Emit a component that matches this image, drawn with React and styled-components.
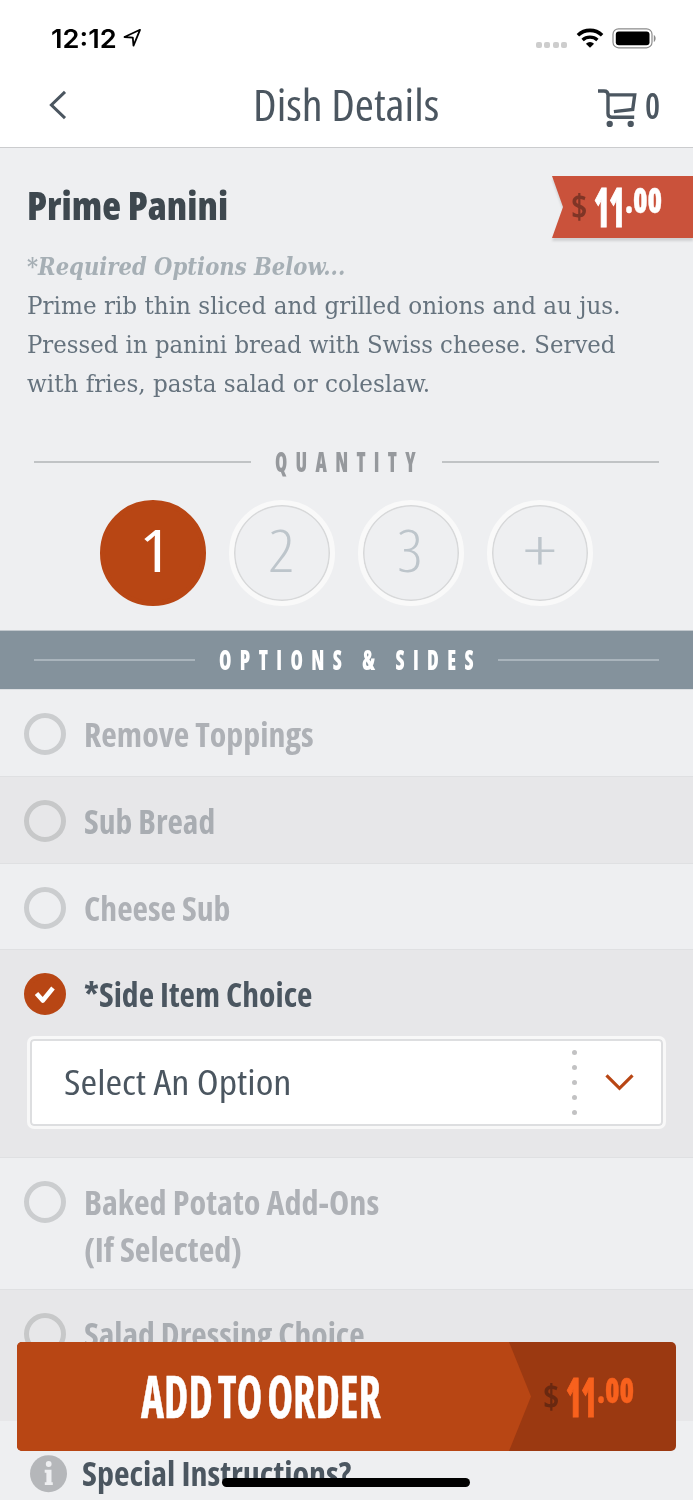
import React, { useLayoutEffect, useRef, useState } from 'react';
import styled, { createGlobalStyle, css } from 'styled-components';

const SANS = "'Open Sans', 'Noto Sans', sans-serif";
const SERIF = "'DejaVu Serif Condensed', 'DejaVu Serif', serif";

const RUST = '#b84614';
const SLATE = '#4b5660';
const PAPER = '#eeeff1';

const GlobalStyle = createGlobalStyle`
  * {
    box-sizing: border-box;
  }

  body {
    margin: 0;
    background: ${PAPER};
    overflow: hidden;
  }
`;

const Screen = styled.div`
  position: relative;
  height: 1500px;
  overflow: hidden;
  background: ${PAPER};
  color: ${SLATE};
  font-family: ${SANS};
  font-stretch: 75%;
`;

const FitBox = styled.span`
  display: block;
  flex: none;
  width: ${({ $width }) => $width}px;
  white-space: nowrap;
`;

const FitInner = styled.span`
  display: inline-block;
  vertical-align: top;
  transform-origin: 0 0;
`;

// condenses one line of text to a given width
const Fit = ({ width, children }) => {
  const inner = useRef(null);
  const [scale, setScale] = useState(1);

  useLayoutEffect(() => {
    setScale(width / inner.current.offsetWidth);
  }, [width, children]);

  return (
    <FitBox $width={width}>
      <FitInner ref={inner} style={{ transform: `scaleX(${scale})` }}>
        {children}
      </FitInner>
    </FitBox>
  );
};

const StatusBar = styled.div`
  display: flex;
  align-items: center;
  height: 76px;
  padding: 0 36px 0 51px;
  background: #fff;
`;

const Clock = styled.div`
  font: 600 26px/36px Inter, sans-serif;
  color: #000;
  margin: 1px 6px 0 0;
`;

const StatusIcons = styled.div`
  display: flex;
  align-items: center;
  margin-left: auto;
`;

const Signal = styled.div`
  display: flex;
  gap: 2.3px;
  margin: 14px 9px 0 0;

  i {
    width: 6px;
    height: 6px;
    border-radius: 2px;
    background: #cdcdcd;
  }
`;

const NavBar = styled.header`
  display: flex;
  align-items: flex-start;
  justify-content: space-between;
  height: 72px;
  padding: 0 31px;
  background: #fff;
  border-bottom: 1px solid #cbccce;
`;

const NavSide = styled.div`
  display: flex;
  align-items: flex-start;
  width: 64px;
  padding: 11px 0 0 ${({ $inset }) => $inset || 0}px;
`;

const NavTitle = styled.h1`
  margin: 2px 1px 0 0;
  font-size: 43px;
  font-weight: 400;
  line-height: 54px;
`;

const CartCount = styled.div`
  margin: -2px 0 0 7px;
  font-size: 36px;
  font-weight: 600;
  line-height: 42px;
`;

const Dish = styled.section`
  height: 482px;
  padding-top: 28px;
`;

const DishTop = styled.div`
  display: flex;
  justify-content: space-between;
  height: 62px;
  padding-left: 27px;
`;

const DishName = styled.h2`
  margin: 4px 0 0;
  font-size: 39px;
  font-weight: 800;
  line-height: 50px;
  color: #3e484f;
`;

const RibbonShadow = styled.div`
  filter: drop-shadow(0 3px 1px rgba(0, 0, 0, 0.12));
`;

const Ribbon = styled.div`
  width: 141px;
  height: 62px;
  padding: 5px 0 0 18px;
  background: #ca523b;
  clip-path: polygon(0 0, 100% 0, 100% 100%, 0 100%, 11px 50%);
`;

const PriceRow = styled.div`
  display: flex;
  font-weight: 800;
  color: ${({ $color }) => $color};
`;

const Currency = styled.span`
  margin: 9px 6px 0 1px;
  font-size: 33px;
  font-weight: 700;
  line-height: 34px;
  color: ${({ $color }) => $color};
`;

const Dollars = styled.span`
  font-size: 54px;
  line-height: 50px;
  -webkit-text-stroke: 1.2px currentColor;
`;

const Cents = styled.span`
  margin: 1px 0 0 1px;
  font-size: 35px;
  line-height: 36px;
  -webkit-text-stroke: 0.4px currentColor;
`;

const Description = styled.div`
  height: 167px;
  padding: 10px 0 0 27px;
  font-family: ${SERIF};
  font-size: 25px;
  line-height: 38.9px;
  color: #66737e;
`;

const Required = styled.div`
  font-weight: 700;
  font-style: italic;
  color: #a6afb5;
`;

const Divider = styled.div`
  display: flex;
  align-items: center;
  gap: 24px;
  height: 40px;
  padding: 0 34px;
  font-size: 28.5px;
  font-weight: 800;
  line-height: 40px;
  letter-spacing: 12px;
  color: ${({ $color }) => $color};

  &::before,
  &::after {
    content: '';
    flex: 1;
    height: 2px;
    background: ${({ $line }) => $line};
  }

  /* tracking after the last letter */
  ${FitBox} {
    margin: -3px -${({ $tail }) => $tail}px 0 0;
  }
`;

const QuantityHeading = styled.div`
  padding-top: 37px;
`;

const Quantities = styled.div`
  display: flex;
  justify-content: center;
  gap: 23.5px;
  margin-top: 18px;
`;

const Quantity = styled.button`
  display: flex;
  justify-content: center;
  width: 105.5px;
  height: 105.5px;
  padding: 0 ${({ $nudge }) => $nudge}px 0 0;
  border: 5px solid #f9f9f9;
  border-radius: 50%;
  background: transparent;
  box-shadow: inset 0 0 0 1.5px #d7d8d9;
  font-family: inherit;
  font-stretch: inherit;
  font-size: 58px;
  font-weight: 300;
  line-height: 90px;
  color: #bdc5cb;

  ${({ $active }) =>
    $active &&
    css`
      border-color: ${RUST};
      background: ${RUST};
      box-shadow: none;
      font-weight: 400;
      color: #fff;
    `}
`;

const OptionsBar = styled.div`
  height: 59px;
  padding-top: 9px;
  background: #84929c;
  border-top: 1px solid #c2c8cd;
`;

const Row = styled.div`
  height: ${({ $height }) => $height}px;
  padding: 22.5px 0 0 24px;
  background: ${({ $shaded }) => ($shaded ? '#e7e7e9' : PAPER)};
  border-top: 1px solid ${({ $first }) => ($first ? '#dcdfe2' : '#dfe0e2')};
`;

const RowHead = styled.div`
  display: flex;
  align-items: flex-start;
`;

const Radio = styled.span`
  display: flex;
  align-items: center;
  justify-content: center;
  width: 42px;
  height: 42px;
  border-radius: 50%;
  border: 5px solid ${({ $shaded }) => ($shaded ? '#c7c8c9' : '#cbcdcf')};

  ${({ $checked }) =>
    $checked &&
    css`
      border-color: ${RUST};
      background: ${RUST};
    `}
`;

const Label = styled.div`
  margin: -0.5px 0 0 18px;
  font-size: 33px;
  font-weight: 700;
  line-height: 46.5px;
  color: ${({ $active, $shaded }) => ($active ? SLATE : $shaded ? '#a9adb2' : '#aeb1b6')};
`;

const Select = styled.div`
  display: flex;
  align-items: center;
  width: 639px;
  height: 93.5px;
  margin: 17px 0 0 3px;
  padding-left: 34px;
  border: 3px solid #f8f8f8;
  border-radius: 7px;
  background: #fff;
  box-shadow: inset 0 0 0 2px #dddee0;
  font-size: 34px;
  line-height: 46px;
`;

const Dots = styled.div`
  display: flex;
  flex-direction: column;
  gap: 10.1px;
  margin: 0 28px 0 auto;

  i {
    width: 5px;
    height: 5px;
    border-radius: 50%;
    background: #c2c2c3;
  }
`;

const ChevronCell = styled.div`
  display: flex;
  width: 58px;
`;

const Special = styled.div`
  display: flex;
  align-items: flex-start;
  padding: 34px 0 0 30px;
`;

const SpecialLabel = styled.div`
  margin: -4px 0 0 14px;
  font-size: 33px;
  font-weight: 700;
  line-height: 46px;
`;

const AddButton = styled.button`
  position: absolute;
  left: 17px;
  top: 1342px;
  display: flex;
  width: 659px;
  height: 109px;
  padding: 0;
  border: 0;
  border-radius: 5px;
  overflow: hidden;
  background: #9b3911;
  font-family: inherit;
  font-stretch: inherit;
  text-align: left;
`;

const AddLabel = styled.div`
  width: 514px;
  height: 100%;
  padding-left: 124px;
  background: ${RUST};
  clip-path: polygon(0 0, 492px 0, 100% 50%, 492px 100%, 0 100%);
  font-size: 59.5px;
  font-weight: 700;
  line-height: 106px;
  word-spacing: -4px;
  color: #fff;
  -webkit-text-stroke: 0.5px #fff;
`;

const AddPrice = styled.div`
  padding: 29px 0 0 10.5px;
`;

const HomeIndicator = styled.div`
  position: absolute;
  left: 222px;
  top: 1478px;
  width: 248px;
  height: 9px;
  border-radius: 5px;
  background: #000;
`;

const Price = ({ color, currencyColor }) => (
  <PriceRow $color={color}>
    <Currency $color={currencyColor}>
      <Fit width={17}>$</Fit>
    </Currency>
    <Dollars>
      <Fit width={30}>11</Fit>
    </Dollars>
    <Cents>
      <Fit width={37}>.00</Fit>
    </Cents>
  </PriceRow>
);

const LocationArrow = () => (
  <svg width="20" height="20" viewBox="0 0 20 20" fill="none" stroke="#000" strokeWidth="1.8" strokeLinejoin="round">
    <path d="M17 1.800 1.500 9l8.300.7.700 8z" />
  </svg>
);

const WifiIcon = () => (
  <svg width="28" height="20" viewBox="0 0 28 20">
    <path d="M1.900 7.200a17.600 17.600 0 0 1 24.200 0" fill="none" stroke="#000" strokeWidth="3.600" />
    <path d="M6.600 12a11 11 0 0 1 14.800 0" fill="none" stroke="#000" strokeWidth="3.400" />
    <path d="M14 19.800l-4.100-4.100a6 6 0 0 1 8.200 0z" />
  </svg>
);

const BatteryIcon = styled(({ className }) => (
  <svg className={className} width="45" height="21" viewBox="0 0 45 21">
    <rect x="1" y=".8" width="39" height="19" rx="5.5" fill="none" stroke="#8b8b8b" strokeWidth="1.2" />
    <rect x="3.8" y="3.5" width="33.7" height="13.8" rx="3" />
    <path d="M41.8 7c2.4.9 2.4 6 0 6.900z" fill="#8b8b8b" />
  </svg>
))`
  margin-left: 8px;
`;

const BackIcon = () => (
  <svg width="22" height="36" viewBox="0 0 22 36" fill="none" stroke={SLATE} strokeWidth="3">
    <path d="M18 4.800 4.400 18 18 31.200" />
  </svg>
);

const CartIcon = () => (
  <svg width="40" height="40" viewBox="0 0 40 40" fill="none" stroke={SLATE} strokeWidth="3.4">
    <path d="M0 4h6q4 0 4 4v18.500q0 3.700 3.700 3.700h22.500" />
    <path d="M10 7.900h26.700l-2 14.500-18.800 2.200" />
    <circle cx="11.700" cy="37" r="3.200" fill={SLATE} stroke="none" />
    <circle cx="32.700" cy="37" r="3.200" fill={SLATE} stroke="none" />
  </svg>
);

const CheckIcon = () => (
  <svg width="22" height="20" viewBox="0 0 22 20" fill="none" stroke="#fff" strokeWidth="4.600">
    <path d="M2.500 9.500l6.300 7L19 4" strokeLinejoin="round" />
  </svg>
);

const ChevronDown = () => (
  <svg width="30" height="18" viewBox="0 0 30 18" fill="none" stroke={RUST} strokeWidth="3.200">
    <path d="M1.500 2.300 14.500 15.300 27.500 2.300" />
  </svg>
);

const InfoIcon = () => (
  <svg width="38" height="38" viewBox="0 0 38 38">
    <circle cx="18.500" cy="18.700" r="18.500" fill="#b5b7ba" />
    <circle cx="18.700" cy="9" r="2.900" fill={PAPER} />
    <path d="M14.700 14.700h6.800v12.500h1.300v2.800h-8v-2.800h1.600v-9.500h-1.700z" fill={PAPER} />
  </svg>
);

const QUANTITIES = [
  { label: '1', width: 30, nudge: 2, active: true },
  { label: '2', width: 27, nudge: 4 },
  { label: '3', width: 26, nudge: 5 },
  { label: '+', width: 34, nudge: 10 },
];

const OPTIONS = [
  { height: 87, lines: [['Remove Toppings', 230]] },
  { height: 87, shaded: true, lines: [['Sub Bread', 131]] },
  { height: 86, lines: [['Cheese Sub', 146]] },
  { height: 208, shaded: true, active: true, lines: [['*Side Item Choice', 228]] },
  { height: 132, lines: [['Baked Potato Add-Ons', 295], ['(If Selected)', 158]] },
  { height: 132, shaded: true, lines: [['Salad Dressing Choice', 281]] },
];

const App = () => (
  <>
    <GlobalStyle />
    <Screen>
      <StatusBar>
        <Clock>
          <Fit width={66}>12:12</Fit>
        </Clock>
        <LocationArrow />
        <StatusIcons>
          <Signal>
            <i />
            <i />
            <i />
            <i />
          </Signal>
          <WifiIcon />
          <BatteryIcon />
        </StatusIcons>
      </StatusBar>

      <NavBar>
        <NavSide $inset={16}>
          <BackIcon />
        </NavSide>
        <NavTitle>
          <Fit width={186}>Dish Details</Fit>
        </NavTitle>
        <NavSide>
          <CartIcon />
          <CartCount>
            <Fit width={15}>0</Fit>
          </CartCount>
        </NavSide>
      </NavBar>

      <Dish>
        <DishTop>
          <DishName>
            <Fit width={201}>Prime Panini</Fit>
          </DishName>
          <RibbonShadow>
            <Ribbon>
              <Price color="#fff" currencyColor="#7f3526" />
            </Ribbon>
          </RibbonShadow>
        </DishTop>

        <Description>
          <Required>
            <Fit width={318}>*Required Options Below...</Fit>
          </Required>
          <Fit width={594}>Prime rib thin sliced and grilled onions and au jus.</Fit>
          <Fit width={588}>Pressed in panini bread with Swiss cheese. Served</Fit>
          <Fit width={403}>with fries, pasta salad or coleslaw.</Fit>
        </Description>

        <QuantityHeading>
          <Divider $tail={6} $color="#96999d" $line="#c0c3c5">
            <Fit width={149}>QUANTITY</Fit>
          </Divider>
        </QuantityHeading>
        <Quantities>
          {QUANTITIES.map(({ label, width, nudge, active }) => (
            <Quantity key={label} $active={active} $nudge={nudge}>
              <Fit width={width}>{label}</Fit>
            </Quantity>
          ))}
        </Quantities>
      </Dish>

      <OptionsBar>
        <Divider $tail={8} $color="#fff" $line="#a9b4bc">
          <Fit width={263}>OPTIONS &amp; SIDES</Fit>
        </Divider>
      </OptionsBar>

      {OPTIONS.map(({ height, shaded, active, lines }, index) => (
        <Row key={lines[0][0]} $height={height} $shaded={shaded} $first={index === 0}>
          <RowHead>
            <Radio $shaded={shaded} $checked={active}>
              {active && <CheckIcon />}
            </Radio>
            <Label $active={active} $shaded={shaded}>
              {lines.map(([text, width]) => (
                <Fit key={text} width={width}>
                  {text}
                </Fit>
              ))}
            </Label>
          </RowHead>
          {active && (
            <Select>
              <Fit width={227}>Select An Option</Fit>
              <Dots>
                <i />
                <i />
                <i />
                <i />
                <i />
              </Dots>
              <ChevronCell>
                <ChevronDown />
              </ChevronCell>
            </Select>
          )}
        </Row>
      ))}

      <Special>
        <InfoIcon />
        <SpecialLabel>
          <Fit width={269}>Special Instructions?</Fit>
        </SpecialLabel>
      </Special>

      <AddButton>
        <AddLabel>
          <Fit width={240}>ADD TO ORDER</Fit>
        </AddLabel>
        <AddPrice>
          <Price color="#f8611d" currencyColor="#692810" />
        </AddPrice>
      </AddButton>
      <HomeIndicator />
    </Screen>
  </>
);

export default App;
